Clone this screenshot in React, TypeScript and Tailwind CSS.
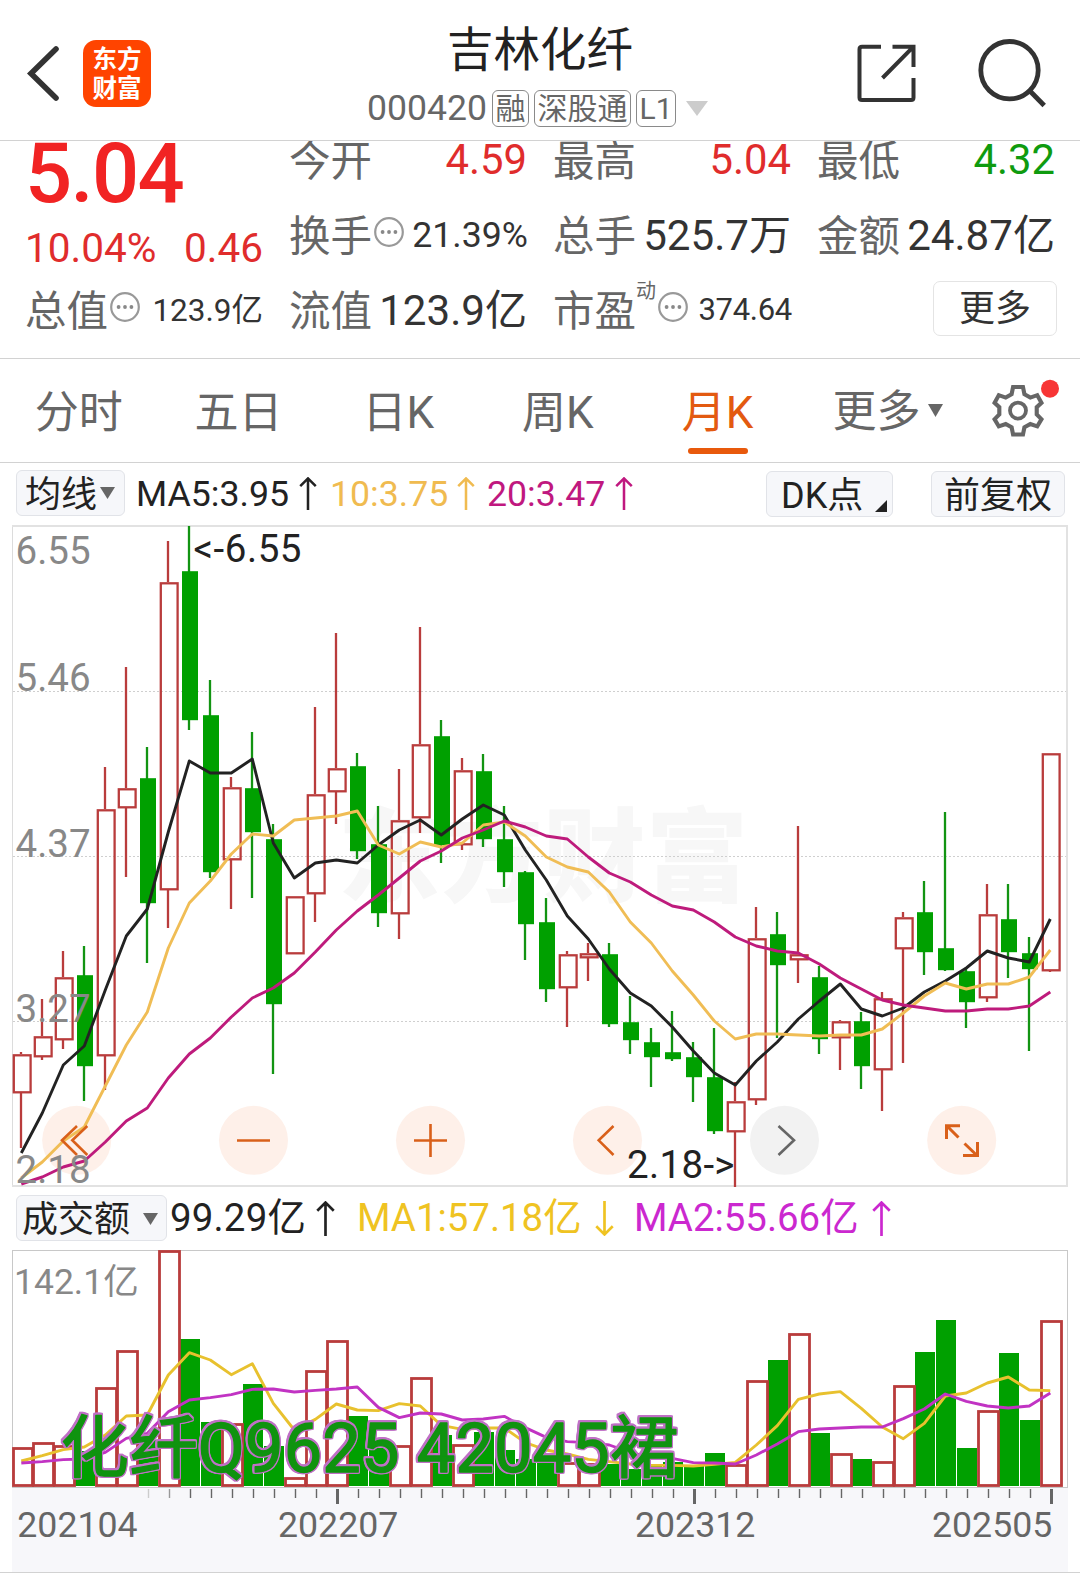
import type { ReactNode } from "react";

type Candle = [up: 0 | 1, high: number, top: number, bottom: number, low: number];

const STEP = 21;
const cx = (i: number) => 21 + STEP * i;

const candles: Candle[] = [
  [1, 1052, 1054, 1093, 1148],
  [1, 999, 1036, 1057, 1060],
  [1, 951, 977, 1040, 1049],
  [0, 946, 975, 1066, 1101],
  [1, 767, 809, 1056, 1090],
  [1, 667, 788, 808, 877],
  [0, 747, 778, 903, 963],
  [1, 541, 582, 890, 928],
  [0, 526, 571, 720, 730],
  [0, 680, 715, 872, 878],
  [1, 777, 787, 860, 909],
  [0, 732, 788, 832, 898],
  [0, 824, 839, 1004, 1074],
  [1, 896, 896, 954, 954],
  [1, 707, 794, 894, 922],
  [1, 633, 768, 792, 824],
  [0, 753, 766, 851, 859],
  [0, 806, 844, 913, 927],
  [1, 769, 820, 914, 939],
  [1, 627, 744, 818, 833],
  [0, 720, 736, 845, 863],
  [1, 758, 770, 845, 850],
  [0, 754, 771, 839, 847],
  [0, 806, 839, 872, 887],
  [0, 871, 872, 924, 960],
  [0, 898, 922, 989, 1002],
  [1, 951, 954, 988, 1027],
  [1, 943, 953, 958, 981],
  [0, 943, 954, 1024, 1027],
  [0, 996, 1022, 1040, 1054],
  [0, 1028, 1042, 1057, 1087],
  [0, 1011, 1052, 1059, 1061],
  [0, 1042, 1057, 1077, 1102],
  [0, 1028, 1077, 1131, 1134],
  [1, 1082, 1101, 1132, 1187],
  [1, 907, 938, 1100, 1105],
  [0, 912, 934, 965, 1038],
  [1, 826, 954, 960, 983],
  [0, 966, 977, 1039, 1054],
  [1, 1020, 1021, 1038, 1070],
  [0, 1012, 1021, 1066, 1089],
  [1, 992, 998, 1070, 1111],
  [1, 912, 917, 949, 1063],
  [0, 881, 912, 952, 975],
  [0, 812, 948, 970, 971],
  [0, 967, 971, 1002, 1028],
  [1, 884, 914, 998, 1002],
  [0, 884, 919, 952, 978],
  [0, 937, 953, 969, 1051],
  [1, 753, 753, 971, 972],
];

const ma5 = [
  1153, 1113, 1065, 1046, 990, 936, 909, 832, 761, 773, 773, 759, 843, 878, 863, 860, 863, 845, 830, 820, 835, 819, 805,
  815, 850, 880, 916, 939, 969, 993, 1006, 1027, 1051, 1073, 1085, 1061, 1042, 1019, 1001, 984, 1009, 1016, 1008, 992,
  981, 968, 951, 958, 962, 919,
];
const ma10 = [
  1178, 1162, 1141, 1127, 1086, 1045, 1012, 948, 903, 881, 854, 834, 836, 820, 818, 816, 811, 845, 854, 842, 847, 843,
  825, 822, 836, 857, 867, 872, 892, 922, 943, 971, 995, 1021, 1039, 1034, 1034, 1035, 1036, 1035, 1035, 1029, 1013, 996,
  983, 989, 984, 984, 977, 950,
];
const ma20 = [
  1184, 1177, 1167, 1161, 1142, 1121, 1108, 1078, 1054, 1038, 1017, 998, 988, 973, 952, 930, 911, 895, 878, 861, 851,
  838, 830, 821, 827, 836, 839, 857, 873, 882, 895, 906, 910, 922, 937, 946, 951, 953, 964, 978, 989, 1000, 1005, 1008,
  1011, 1011, 1009, 1009, 1006, 992,
];

const volTops = [
  1447, 1442, 1445, 1451, 1387, 1350, 1440, 1250, 1339, 1422, 1423, 1384, 1446, 1477, 1370, 1340, 1416, 1448, 1445, 1377,
  1435, 1444, 1432, 1450, 1459, 1460, 1462, 1463, 1464, 1469, 1466, 1462, 1466, 1453, 1464, 1380, 1360, 1333, 1433, 1453,
  1459, 1461, 1385, 1352, 1320, 1448, 1410, 1353, 1420, 1320,
];
const volMa1 = [
  813, 797, 779, 771, 735, 678, 675, 555, 488, 510, 554, 521, 640, 720, 688, 642, 660, 662, 641, 648, 706, 718, 714, 714,
  758, 780, 792, 808, 815, 822, 826, 826, 828, 823, 817, 765, 707, 628, 612, 605, 655, 711, 746, 700, 618, 609, 579, 561,
  600, 602,
].map((v) => 1190 + v / 3);
const volMa2 = [
  819, 815, 809, 807, 787, 745, 730, 665, 630, 623, 614, 598, 597, 606, 601, 597, 591, 652, 683, 669, 672, 690, 687, 679,
  713, 742, 755, 758, 765, 787, 803, 805, 818, 819, 822, 795, 762, 725, 717, 714, 711, 711, 686, 657, 612, 634, 648, 654,
  648, 609,
].map((v) => 1190 + v / 3);

const RED = "#b93c3c";
const GREEN = "#00a000";

const line = (ys: number[]) => ys.map((y, i) => `${cx(i) + 0.3},${y}`).join(" ");

function Line({ ys, color }: { ys: number[]; color: string }) {
  return <polyline points={line(ys)} fill="none" stroke={color} strokeWidth="2.9" strokeLinejoin="round" />;
}

function MoreDots() {
  return (
    <svg className="-mt-[8px] ml-[2px] h-[30px] w-[30px] shrink-0" viewBox="0 0 30 30">
      <circle cx="15" cy="15" r="13.8" fill="none" stroke="#999" strokeWidth="2.2" />
      <circle cx="8.6" cy="15" r="1.9" fill="#888" />
      <circle cx="15" cy="15" r="1.9" fill="#888" />
      <circle cx="21.4" cy="15" r="1.9" fill="#888" />
    </svg>
  );
}

function Triangle({ className }: { className: string }) {
  return (
    <svg className={className} viewBox="0 0 10 10" preserveAspectRatio="none">
      <path d="M0 0H10L5 10Z" fill="currentColor" />
    </svg>
  );
}

function Arrow({ down = false, className }: { down?: boolean; className: string }) {
  return (
    <svg className={className} viewBox="0 0 18 34" fill="none" stroke="currentColor" strokeWidth="2.6">
      <path d={down ? "M9 0V33M1 24.5L9 32.5L17 24.5" : "M9 34V1M1 9.5L9 1.5L17 9.5"} />
    </svg>
  );
}

function Label({ children }: { children: ReactNode }) {
  return <span className="pt-[2px] text-[41.5px] leading-[50px] text-[#666]">{children}</span>;
}

function Cell({ label, children }: { label: ReactNode; children?: ReactNode }) {
  return (
    <div className="flex h-[75px] w-[238px] items-center justify-between whitespace-nowrap">
      <div className="flex items-center">{label}</div>
      {children}
    </div>
  );
}

function Tag({ children, className }: { children: ReactNode; className: string }) {
  return (
    <span
      className={`flex h-[37px] items-center justify-center rounded-[6px] border border-[#8a8a8a] text-[30px] leading-[35px] whitespace-nowrap text-[#666] ${className}`}
    >
      {children}
    </span>
  );
}

function Header() {
  return (
    <header className="flex h-[141px] shrink-0 items-start border-b border-[#d2d2d2]">
      <svg
        className="mt-[43px] ml-[24px] h-[60px] w-[38px]"
        viewBox="24 43 38 60"
        fill="none"
        stroke="#333"
        strokeWidth="5.6"
        strokeLinecap="round"
        strokeLinejoin="miter"
      >
        <path d="M56 49L31 73.500L56 98" />
      </svg>
      <div className="mt-[40px] ml-[21px] flex h-[67px] w-[68px] flex-col items-center justify-center rounded-[13px] bg-[#ff4400] text-[24.5px] leading-[29px] font-bold text-white">
        <span>东方</span>
        <span>财富</span>
      </div>
      <div className="ml-[217px] w-[344px] pt-[22px]">
        <h1 className="ml-[79px] text-[46.500px] leading-[56px] font-normal whitespace-nowrap text-[#222]">吉林化纤</h1>
        <div className="mt-[11px] -ml-[1px] flex h-[38px] items-center">
          <span className="w-[125px] text-[35.600px] leading-[38px] text-[#666]">000420</span>
          <Tag className="w-[37px]">融</Tag>
          <Tag className="ml-[5px] w-[97px]">深股通</Tag>
          <Tag className="ml-[5px] w-[40px]">L1</Tag>
          <Triangle className="ml-[10px] h-[15px] w-[22px] text-[#ccc]" />
        </div>
      </div>
      <svg className="mt-[42px] ml-[143px] h-[64px] w-[62px]" viewBox="855 42 62 64" fill="none" stroke="#333" strokeWidth="4">
        <path d="M881 46.700H862Q859.500 46.700 859.500 49.200V97.500Q859.500 100 862 100H911Q913.500 100 913.500 97.500V78" />
        <path d="M892.500 46.700H913.500V67M882.500 78L913 47.200" />
      </svg>
      <svg className="mt-[36px] ml-[59px] h-[76px] w-[74px]" viewBox="976 36 74 76" fill="none" stroke="#333" strokeWidth="4.800">
        <circle cx="1009.500" cy="70.200" r="28.700" />
        <path d="M1029.700 90.700L1044.200 105.500" />
      </svg>
    </header>
  );
}

function Stats() {
  return (
    <section className="h-[218px] shrink-0 overflow-hidden border-b border-[#d2d2d2]">
      <div className="-mt-[18px] flex gap-[26px] pl-[25px]">
        <div className="w-[238px]">
          <div className="flex h-[150px] flex-col pt-[11px]">
            <span className="text-[83px] leading-[80px] font-medium tracking-[-1.6px] text-[#f12323]">5.04</span>
            <div className="flex justify-between text-[40.5px] leading-[69px] text-[#e02c2c]">
              <span>10.04%</span>
              <span>0.46</span>
            </div>
          </div>
          <Cell label={<><Label>总值</Label><MoreDots /></>}>
            <span className="text-[31.5px] text-[#333]">123.9亿</span>
          </Cell>
        </div>
        <div>
          <Cell label={<Label>今开</Label>}>
            <span className="text-[41.8px] text-[#e02c2c]">4.59</span>
          </Cell>
          <Cell label={<><Label>换手</Label><MoreDots /></>}>
            <span className="-mr-px text-[35.700px] text-[#333]">21.39%</span>
          </Cell>
          <Cell label={<Label>流值</Label>}>
            <span className="text-[42.1px] text-[#333]">123.9亿</span>
          </Cell>
        </div>
        <div>
          <Cell label={<Label>最高</Label>}>
            <span className="text-[41.8px] text-[#e02c2c]">5.04</span>
          </Cell>
          <Cell label={<Label>总手</Label>}>
            <span className="text-[42.1px] text-[#333]">525.7万</span>
          </Cell>
          <Cell
            label={
              <>
                <Label>市盈</Label>
                <span className="-mt-[40px] text-[20px] leading-[24px] text-[#666]">动</span>
                <MoreDots />
              </>
            }
          >
            <span className="-mr-px text-[31px] tracking-[-0.3px] text-[#333]">374.64</span>
          </Cell>
        </div>
        <div>
          <Cell label={<Label>最低</Label>}>
            <span className="text-[41.8px] text-[#0f9b0f]">4.32</span>
          </Cell>
          <Cell label={<Label>金额</Label>}>
            <span className="text-[42.1px] text-[#333]">24.87亿</span>
          </Cell>
          <div className="flex h-[75px] items-center justify-end">
            <button className="-mr-[2px] mb-[5px] h-[55px] w-[124px] rounded-[7px] border border-[#e4e4e4] pt-[2px] text-[36px] leading-[50px] text-[#333]">
              更多
            </button>
          </div>
        </div>
      </div>
    </section>
  );
}

function Tabs() {
  const tabs = ["分时", "五日", "日K", "周K", "月K"];
  return (
    <nav className="flex h-[104px] shrink-0 border-b border-[#d2d2d2] pt-[3px] text-[44px] leading-[102px] text-[#666]">
      {tabs.map((t) => (
        <div
          key={t}
          className={
            t === "月K"
              ? "relative -left-px w-[159.700px] text-center text-[#e35a10]"
              : "relative -left-px w-[159.700px] text-center"
          }
        >
          {t}
          {t === "月K" && <span className="absolute bottom-[8px] left-[50px] h-[6px] w-[60px] rounded-full bg-[#e8590c]" />}
        </div>
      ))}
      <div className="ml-[34px] flex items-center">
        更多
        <Triangle className="-mt-[4px] ml-[8px] h-[13px] w-[15px]" />
      </div>
      <svg className="mt-[16px] ml-[45px] h-[64px] w-[76px] shrink-0" viewBox="988.500 378 76 64" fill="none">
        <path
          transform="matrix(.985 0 0 .962 15.300 13.700)"
          d="M1013.500 388H1023.500L1025 395.500L1031 399L1038 396.500L1042.300 404.500L1037.500 409V416.500L1042.300 421.500L1038 429L1031 426.500L1025 430L1023.500 437.500H1013.500L1012 430L1006 426.500L999 429L994.700 421.500L999.500 416.500V409L994.700 404.500L999 396.500L1006 399L1012 395.500Z"
          stroke="#666"
          strokeWidth="4.200"
        />
        <circle cx="1018.500" cy="410.600" r="8" stroke="#666" strokeWidth="3.800" />
        <circle cx="1050.500" cy="388.700" r="9" fill="#f73535" />
      </svg>
    </nav>
  );
}

const CHIP =
  "flex h-[46px] shrink-0 items-center rounded-[6px] border border-[#e1e3e8] bg-[#f6f7fa] pt-[3px] text-[36px] leading-[40px] whitespace-nowrap text-[#222]";

function MaRow() {
  return (
    <div className="flex h-[61px] shrink-0 items-start pt-[7px] pl-[16px] text-[35.700px] leading-[48px] whitespace-nowrap">
      <div className={`${CHIP} w-[109px] pl-[8px]`}>
        均线
        <Triangle className="-mt-[3px] ml-[3px] h-[12px] w-[15px] text-[#666]" />
      </div>
      <span className="flex w-[195px] items-center pl-[11px] text-[#222]">
        MA5:3.95
        <Arrow className="mb-[2px] ml-[10px] h-[33px] w-[18px]" />
      </span>
      <span className="flex w-[157px] items-center pl-[10px] text-[#f0bb50]">
        10:3.75
        <Arrow className="mb-[2px] ml-[9px] h-[33px] w-[18px]" />
      </span>
      <span className="flex w-[289px] items-center pl-[10px] text-[#c0187f]">
        20:3.47
        <Arrow className="mb-[2px] ml-[10px] h-[33px] w-[18px]" />
      </span>
      <div className={`${CHIP} mt-px w-[127px] justify-between pr-[5px] pl-[14px]`}>
        DK点
        <svg className="mt-[20px] h-[12px] w-[12px]" viewBox="0 0 12 12">
          <path d="M12 0V12H0Z" fill="#222" />
        </svg>
      </div>
      <div className={`${CHIP} mt-px ml-[38px] w-[134px] justify-center`}>前复权</div>
    </div>
  );
}

function RoundButton({ x, muted = false }: { x: number; muted?: boolean }) {
  return <circle cx={x} cy="1140.300" r="34.500" fill={muted ? "#f2f2f2" : "#fef0e9"} />;
}

function PriceChart() {
  return (
    <svg className="block h-[665px] w-[1080px] shrink-0" viewBox="0 524 1080 665" fontFamily="Roboto, 'Noto Sans CJK SC', sans-serif">
      <path d="M12.500 525V1186" stroke="#dcdcdc" />
      <path d="M12 526H1067V1186H12" fill="none" stroke="#e2e2e2" strokeWidth="2" />
      <text x="338" y="894" fontSize="102" fontWeight="900" fill="#f7f7f7" textLength="410">
        东方财富
      </text>
      {[691.5, 856.5, 1021.5].map((y) => (
        <path key={y} d={`M13 ${y}H1066`} stroke="#cfcfcf" strokeDasharray="2 2" />
      ))}
      <RoundButton x={76.7} />
      <RoundButton x={253.5} />
      <RoundButton x={430.5} />
      <RoundButton x={607.5} />
      <RoundButton x={784.5} muted />
      <RoundButton x={961.7} />
      {candles.map(([up, high, top, bottom, low], i) => {
        const x = cx(i);
        return up ? (
          <g key={i} stroke={RED} strokeWidth="2.3" fill="none">
            <path d={`M${x} ${high}V${top}M${x} ${bottom}V${low}`} />
            <rect x={x - 7.2} y={top + 1.3} width="16.800" height={bottom - top - 2} />
          </g>
        ) : (
          <g key={i}>
            <path d={`M${x} ${high}V${low}`} stroke="#129412" strokeWidth="2.3" />
            <rect x={x - 7} y={top + 0.2} width="16" height={bottom - top} fill={GREEN} />
          </g>
        );
      })}
      <Line ys={ma5} color="#222" />
      <Line ys={ma10} color="#f0bd55" />
      <Line ys={ma20} color="#be1b7c" />
      <g fill="none" stroke="#d9601a" strokeWidth="2.600">
        <path d="M77 1126L62 1140.300L77 1155M87.300 1126L72.300 1140.300L87.300 1155" />
        <path d="M237 1140.500H270M414 1140.500H447M430.500 1124V1157" />
        <path d="M613.500 1126L598.700 1140.300L613.500 1155" />
        <path d="M778.500 1126L794 1140.300L778.500 1155" stroke="#666" />
        <path strokeWidth="3" d="M960 1125.700H946.500V1139M947 1126L958.500 1137.500M977.500 1142V1155.500H963M964.500 1143.500L977 1155.500" />
      </g>
      <g fontSize="38.500" fill="#888">
        <text x="15.500" y="564">6.55</text>
        <text x="15.500" y="691">5.46</text>
        <text x="15.500" y="857">4.37</text>
        <text x="15.500" y="1021.700">3.27</text>
        <text x="15.500" y="1182.700">2.18</text>
      </g>
      <g fontSize="38.500" fill="#222">
        <text x="193.500" y="562" textLength="108">{"<-6.55"}</text>
        <text x="627" y="1177.700" textLength="107.500">{"2.18->"}</text>
      </g>
    </svg>
  );
}

function VolumeRow() {
  return (
    <div className="flex h-[61px] shrink-0 items-start pt-[6px] pl-[16px] text-[38.400px] leading-[46px] whitespace-nowrap">
      <div className={`${CHIP} w-[151px] pl-[5px]`}>
        成交额
        <Triangle className="-mt-[2px] ml-[13px] h-[12px] w-[15px] text-[#666]" />
      </div>
      <span className="flex w-[190px] items-center pl-[3px] tracking-[0.2px] text-[#222]">
        99.29亿
        <Arrow className="ml-[10px] h-[35px] w-[19px]" />
      </span>
      <span className="flex w-[277px] items-center text-[#efc322]">
        MA1:57.18亿
        <Arrow down className="ml-[13px] h-[35px] w-[19px]" />
      </span>
      <span className="flex items-center text-[#cb28cf]">
        MA2:55.66亿
        <Arrow className="ml-[13px] h-[35px] w-[19px]" />
      </span>
    </div>
  );
}

function VolumeChart() {
  const ticks = Array.from({ length: 44 }, (_, k) => k);
  return (
    <svg className="block h-[339px] w-[1080px] shrink-0" viewBox="0 1250 1080 339" fontFamily="Roboto, 'Noto Sans CJK SC', sans-serif">
      <rect x="12" y="1488" width="1056" height="84" fill="#f7f7fa" />
      <rect x="12.500" y="1250.500" width="1055" height="237" fill="none" stroke="#c8c8c8" />
      {volTops.map((top, i) =>
        candles[i][0] ? null : <rect key={i} x={cx(i) - 9} y={top} width="20" height={1486 - top} fill={GREEN} />,
      )}
      {volTops.map((top, i) => {
        const left = Math.max(cx(i) - 10, 12);
        return candles[i][0] ? (
          <rect
            key={i}
            x={left + 1.5}
            y={top + 1.5}
            width={cx(i) + 13 - left - 3}
            height={1486.5 - top - 2.5}
            fill="none"
            stroke={RED}
            strokeWidth="2.800"
          />
        ) : null;
      })}
      <Line ys={volMa1} color="#e8c12e" />
      <Line ys={volMa2} color="#c133c3" />
      <text x="14" y="1293.700" fontSize="35.500" fill="#888">
        142.1亿
      </text>
      {ticks.map((k) => {
        const x = 148.5 + STEP * k;
        const major = k === 9 || k === 26 || k === 43;
        return (
          <path
            key={k}
            d={`M${x} 1489V${major ? 1504 : 1498}`}
            stroke={k === 0 ? "#ccc" : k === 1 ? "#999" : "#666"}
            strokeWidth={major ? 3 : 1.4}
          />
        );
      })}
      <g fontSize="35.700" fill="#666">
        <text x="17.300" y="1537">202104</text>
        <text x="278" y="1537">202207</text>
        <text x="635" y="1537">202312</text>
        <text x="932" y="1537">202505</text>
      </g>
      <text
        className="[filter:drop-shadow(1.3px_0_0_#c070c6)_drop-shadow(-1.3px_0_0_#c070c6)_drop-shadow(0_1.3px_0_#c070c6)_drop-shadow(0_-1.3px_0_#c070c6)]"
        x="60.500"
        y="1472"
        fontSize="68.500"
        fill="#0f930f"
        stroke="#0f930f"
        strokeWidth="1.300"
        strokeLinejoin="round"
        textLength="618"
      >
        化纤Q9625 42045裙
      </text>
      <path d="M0 1572.500H1080" stroke="#d2d2d2" />
    </svg>
  );
}

export default function App() {
  return (
    <main className="flex h-[1589px] w-[1080px] flex-col overflow-hidden bg-white font-[Roboto,'Noto_Sans_CJK_SC',sans-serif]">
      <Header />
      <Stats />
      <Tabs />
      <MaRow />
      <PriceChart />
      <VolumeRow />
      <VolumeChart />
    </main>
  );
}
